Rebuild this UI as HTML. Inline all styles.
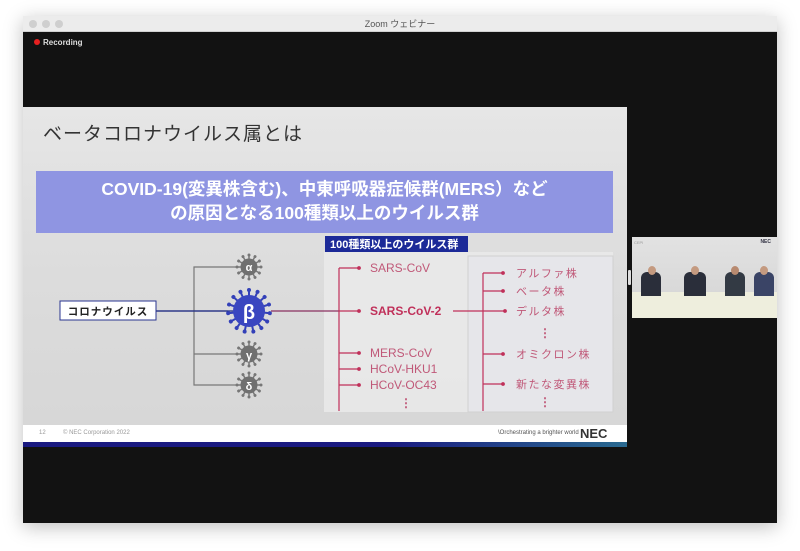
<!DOCTYPE html>
<html><head><meta charset="utf-8"><style>
*{margin:0;padding:0;box-sizing:border-box}
body{width:800px;height:551px;background:#fff;position:relative;overflow:hidden;font-family:"Liberation Sans","Noto Sans CJK JP",sans-serif}
.win{position:absolute;left:23px;top:16px;width:754px;height:507px;background:#121212;box-shadow:0 4px 18px rgba(0,0,0,.25)}
.tb{position:absolute;left:0;top:0;width:754px;height:16px;background:#ececec;border-bottom:1px solid #d0d0d0;font-size:9px;color:#555;text-align:center;line-height:16px}
.dot{position:absolute;top:4px;width:8px;height:8px;border-radius:50%;background:#cfcfcf}
.rec{position:absolute;left:11px;top:22px;color:#ddd;font-size:8px;font-weight:bold}
.rec i{display:inline-block;width:6px;height:6px;border-radius:50%;background:#e62020;margin-right:3px;vertical-align:-0px}
.slide{position:absolute;left:0px;top:91px;width:604px;height:340px;background:linear-gradient(180deg,#e6e6e6,#dcdcdc 50%,#d6d6d6);overflow:hidden}
.t{position:absolute;left:20px;top:12px;font-size:19px;color:#333;letter-spacing:1px}
.ban{position:absolute;left:13px;top:64px;width:577px;height:62px;background:#8f95e2;color:#fff;font-weight:bold;font-size:17.5px;text-align:center;line-height:24px;padding-top:6px}
.foot{position:absolute;left:0;top:318px;width:604px;height:18px;background:#fff;font-size:6px;color:#999}
.strip{position:absolute;left:0;top:335px;width:604px;height:5px;background:linear-gradient(90deg,#1a1a80,#1a1a80 60%,#2a6a90)}
.vid{position:absolute;left:609px;top:221px;width:145px;height:81px;background:#d8d8d8;overflow:hidden}
</style></head><body>
<div class="win">
<div class="tb">Zoom ウェビナー<span class="dot" style="left:6px"></span><span class="dot" style="left:19px"></span><span class="dot" style="left:32px"></span></div>
<div class="rec"><i></i>Recording</div>
<div class="slide">
<div class="t">ベータコロナウイルス属とは</div>
<div class="ban">COVID-19(変異株含む)、中東呼吸器症候群(MERS）など<br>の原因となる100種類以上のウイルス群</div>
<svg style="position:absolute;left:0;top:0" width="604" height="340" font-family="Liberation Sans, Noto Sans CJK JP, sans-serif">
<defs>
<g id="sp"><line x1="0" y1="0" x2="0" y2="-12" stroke="#777" stroke-width="1.5"/><circle cx="0" cy="-12" r="1.5" fill="#777"/></g>
<g id="vs"><use href="#sp"/><use href="#sp" transform="rotate(30)"/><use href="#sp" transform="rotate(60)"/><use href="#sp" transform="rotate(90)"/><use href="#sp" transform="rotate(120)"/><use href="#sp" transform="rotate(150)"/><use href="#sp" transform="rotate(180)"/><use href="#sp" transform="rotate(210)"/><use href="#sp" transform="rotate(240)"/><use href="#sp" transform="rotate(270)"/><use href="#sp" transform="rotate(300)"/><use href="#sp" transform="rotate(330)"/><circle r="8.5" fill="#707070"/></g>
<g id="bs"><line x1="0" y1="0" x2="0" y2="-21" stroke="#3340b8" stroke-width="2"/><circle cy="-21" r="2" fill="#3340b8"/></g>
</defs>
<rect x="301" y="145" width="289" height="160" fill="#ebebeb" opacity=".8"/>
<rect x="445" y="149" width="145" height="156" fill="#e6e6ea" stroke="#d0d0d0"/>
<rect x="302" y="129" width="143" height="16" fill="#1c2a98"/>
<text x="307" y="141" font-size="11" font-weight="bold" fill="#fff">100種類以上のウイルス群</text>
<g transform="translate(0,-16)">
<path d="M213 176H171V294H213M171 263H213M133 220H205" stroke="#777" stroke-width="1.2" fill="none"/>
<line x1="133" y1="220" x2="210" y2="220" stroke="#1c2a88" stroke-width="1.2"/>
<rect x="37" y="210" width="96" height="19" fill="#fff" stroke="#2a3590"/>
<text x="85" y="224" font-size="10.5" font-weight="bold" fill="#222" text-anchor="middle" letter-spacing="1">コロナウイルス</text>
<use href="#vs" transform="translate(226,176)"/>
<use href="#vs" transform="translate(226,263)"/>
<use href="#vs" transform="translate(226,294)"/>
<g transform="translate(226,220)"><use href="#bs"/><use href="#bs" transform="rotate(24)"/><use href="#bs" transform="rotate(48)"/><use href="#bs" transform="rotate(72)"/><use href="#bs" transform="rotate(96)"/><use href="#bs" transform="rotate(120)"/><use href="#bs" transform="rotate(144)"/><use href="#bs" transform="rotate(168)"/><use href="#bs" transform="rotate(192)"/><use href="#bs" transform="rotate(216)"/><use href="#bs" transform="rotate(240)"/><use href="#bs" transform="rotate(264)"/><use href="#bs" transform="rotate(288)"/><use href="#bs" transform="rotate(312)"/><use href="#bs" transform="rotate(336)"/><circle r="16" fill="#3a46c0"/></g>
<g font-weight="bold" fill="#fff" text-anchor="middle"><text x="226" y="180" font-size="11">α</text><text x="226" y="228" font-size="20">β</text><text x="226" y="268" font-size="11">γ</text><text x="226" y="299" font-size="11">δ</text></g>
<line x1="248" y1="220" x2="316" y2="220" stroke="#8a3060" stroke-width="1.2"/>
<g stroke="#c0305a" stroke-width="1.2" fill="#c0305a">
<path d="M316 177V320M316 177H336M316 220H336M316 262H336M316 278H336M316 294H336" fill="none"/>
<circle cx="336" cy="177" r="1.3"/><circle cx="336" cy="220" r="1.3"/><circle cx="336" cy="262" r="1.3"/><circle cx="336" cy="278" r="1.3"/><circle cx="336" cy="294" r="1.3"/>
<path d="M430 220H482M460 182V320M460 182H480M460 200H480M460 263H480M460 293H480" fill="none"/>
<circle cx="480" cy="182" r="1.3"/><circle cx="480" cy="200" r="1.3"/><circle cx="482" cy="220" r="1.3"/><circle cx="480" cy="263" r="1.3"/><circle cx="480" cy="293" r="1.3"/>
</g>
<g font-size="12" fill="#c05878">
<text x="347" y="181">SARS-CoV</text>
<text x="347" y="224" font-weight="bold" fill="#c0305a">SARS-CoV-2</text>
<text x="347" y="266">MERS-CoV</text>
<text x="347" y="282">HCoV-HKU1</text>
<text x="347" y="298">HCoV-OC43</text>
<text x="377" y="316" font-weight="bold">⋮</text>
<g font-size="11" letter-spacing="1.5">
<text x="493" y="186">アルファ株</text>
<text x="493" y="204">ベータ株</text>
<text x="493" y="224">デルタ株</text>
<text x="493" y="267">オミクロン株</text>
<text x="493" y="297">新たな変異株</text>
</g>
<text x="516" y="246" font-weight="bold">⋮</text>
<text x="516" y="315" font-weight="bold">⋮</text>
</g>
</g>
</svg>
<div class="foot"><span style="position:absolute;left:16px;top:5px">12</span><span style="position:absolute;left:40px;top:5px">© NEC Corporation 2022</span><span style="position:absolute;left:475px;top:5px;color:#555">\Orchestrating a brighter world</span><span style="position:absolute;left:557px;top:1px;font-size:13px;font-weight:bold;color:#333">NEC</span></div>
<div class="strip"></div>
</div>
<div style="position:absolute;left:605px;top:254px;width:3px;height:15px;background:#ddd;border-radius:1px"></div>
<div class="vid">
<div style="position:absolute;left:0;top:0;width:145px;height:81px;background:linear-gradient(180deg,#e2e2e2,#d4d4d4)"></div>
<div style="position:absolute;left:2px;top:3px;font-size:4px;color:#999">CEPI</div>
<div style="position:absolute;right:6px;top:2px;font-size:5px;color:#334;font-weight:bold">NEC</div>
<div style="position:absolute;left:0;top:55px;width:145px;height:26px;background:#eeeedd"></div>
<div style="position:absolute;left:9px;top:35px;width:20px;height:24px;background:#2a2e3a;border-radius:6px 6px 0 0"></div>
<div style="position:absolute;left:16px;top:29px;width:8px;height:9px;background:#c49a80;border-radius:50%"></div>
<div style="position:absolute;left:52px;top:35px;width:22px;height:24px;background:#2a2e3a;border-radius:6px 6px 0 0"></div>
<div style="position:absolute;left:59px;top:29px;width:8px;height:9px;background:#c49a80;border-radius:50%"></div>
<div style="position:absolute;left:93px;top:35px;width:20px;height:24px;background:#333a44;border-radius:6px 6px 0 0"></div>
<div style="position:absolute;left:99px;top:29px;width:8px;height:9px;background:#b88a70;border-radius:50%"></div>
<div style="position:absolute;left:122px;top:35px;width:20px;height:24px;background:#3a4466;border-radius:6px 6px 0 0"></div>
<div style="position:absolute;left:128px;top:29px;width:8px;height:9px;background:#c49a80;border-radius:50%"></div>
</div>
</div>
</body></html>
